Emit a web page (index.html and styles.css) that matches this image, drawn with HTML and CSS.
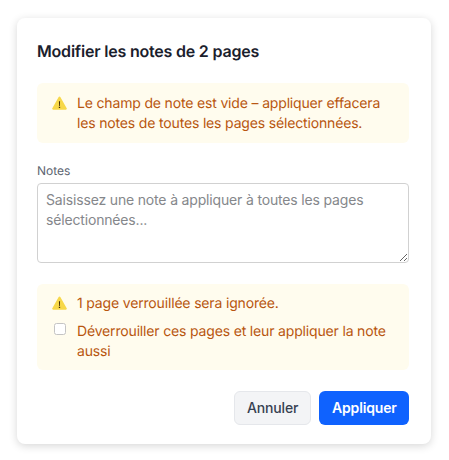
FILE: index.html
```html
<!DOCTYPE html>
<html lang="fr">
<head>
<meta charset="utf-8">
<title>Modifier les notes</title>
<link rel="stylesheet" href="styles.css">
</head>
<body>
<div class="dialog">
  <h1 class="title">Modifier les notes de 2 pages</h1>
  <div class="alert alert-top">
    <div class="alert-row">
      <svg class="warn" viewBox="0 0 16 15" aria-hidden="true"><path class="warn-bg" d="M8 .6c.4 0 .7.2.9.6l6.800 12c.4.7 0 1.400-.8 1.400H1.100c-.8 0-1.200-.7-.8-1.400l6.800-12c.2-.4.5-.6.900-.6z"/><path class="warn-mark" d="M7.400 5.600h1.200l-.2 5h-.8zM7.300 11.500h1.400v1.400H7.300z"/></svg>
      <span>Le champ de note est vide – appliquer effacera les notes de toutes les pages sélectionnées.</span>
    </div>
  </div>
  <label class="label" for="notes">Notes</label>
  <textarea class="notes" id="notes" placeholder="Saisissez une note à appliquer à toutes les pages sélectionnées..."></textarea>
  <div class="alert alert-locked">
    <div class="alert-row">
      <svg class="warn" viewBox="0 0 16 15" aria-hidden="true"><path class="warn-bg" d="M8 .6c.4 0 .7.2.9.6l6.800 12c.4.7 0 1.400-.8 1.400H1.100c-.8 0-1.200-.7-.8-1.400l6.800-12c.2-.4.5-.6.900-.6z"/><path class="warn-mark" d="M7.400 5.600h1.200l-.2 5h-.8zM7.300 11.500h1.400v1.400H7.300z"/></svg>
      <span>1 page verrouillée sera ignorée.</span>
    </div>
    <label class="alert-row check-row">
      <span class="check-slot"><input class="check" type="checkbox"></span>
      <span>Déverrouiller ces pages et leur appliquer la note aussi</span>
    </label>
  </div>
  <div class="actions">
    <button class="btn btn-cancel" type="button">Annuler</button>
    <button class="btn btn-apply" type="button">Appliquer</button>
  </div>
</div>
</body>
</html>
```
FILE: styles.css
```css
* {
  box-sizing: border-box;
}

html,
body {
  margin: 0;
  height: 100%;
  background: #fff;
}

body {
  padding: 18px 18px 16px 17px;
  font-family: Inter, "Liberation Sans", sans-serif;
  font-size: 14px;
  line-height: 20px;
  text-rendering: geometricPrecision;
  letter-spacing: -0.165px;
}

.dialog {
  width: 414px;
  height: 426px;
  padding: 23px 22px 19px 20px;
  background: #fff;
  border-radius: 8px;
  box-shadow: 0 2px 8px rgba(0, 0, 0, 0.16);
  display: flex;
  flex-direction: column;
}

.title {
  margin: 0 0 22px;
  font-size: 16px;
  line-height: 20px;
  font-weight: 600;
  letter-spacing: -0.2px;
  color: #1a202c;
}

.alert {
  background: #fffcee;
  border-radius: 6px;
  color: #b8560f;
}

.alert-top {
  padding: 11px 14px 9px 15px;
}

.alert-locked {
  padding: 10px 14px 8px 15px;
  margin-top: 21px;
}

.alert-row {
  display: flex;
  gap: 10px;
  align-items: flex-start;
}

.warn {
  flex: none;
  width: 15px;
  height: 14px;
  margin-top: 2px;
}

.warn-bg {
  fill: #f7d84a;
}

.warn-mark {
  fill: #3f2a05;
}

.check-row {
  margin-top: 8px;
}

.check-slot {
  flex: none;
  width: 15px;
  height: 20px;
  display: flex;
  justify-content: center;
}

.check {
  appearance: none;
  width: 12px;
  height: 12px;
  margin: 1px 0 0;
  background: #fff;
  border: 1px solid #c4c4c4;
  border-radius: 2.500px;
}

.label {
  margin-top: 19px;
  font-size: 12px;
  line-height: 18px;
  letter-spacing: 0;
  color: #5b6470;
}

.notes {
  display: block;
  width: 100%;
  height: 80px;
  margin: 3px 0 0;
  padding: 6px 8px;
  font: inherit;
  letter-spacing: inherit;
  color: #1a202c;
  background: #fff;
  border: 1px solid #d1d1d1;
  border-radius: 4px;
  outline: none;
}

.notes::placeholder {
  color: #85878b;
  opacity: 1;
}

.actions {
  margin-top: 21px;
  display: flex;
  justify-content: flex-end;
  gap: 8px;
}

.btn {
  height: 34px;
  padding: 0 12px;
  font: inherit;
  letter-spacing: inherit;
  font-weight: 500;
  border-radius: 6px;
  border: 1px solid transparent;
}

.btn-cancel {
  width: 77px;
  background: #f3f4f6;
  border-color: #e5e7eb;
  color: #374151;
}

.btn-apply {
  width: 90px;
  background: #0f62fe;
  color: #fff;
  font-weight: 600;
}
```
